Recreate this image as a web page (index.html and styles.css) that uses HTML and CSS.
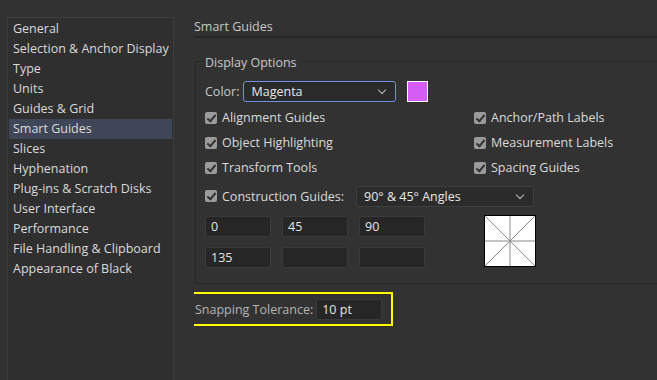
FILE: index.html
```html
<!DOCTYPE html>
<html lang="en">
<head>
    <meta charset="UTF-8">
    <title>Preferences - Smart Guides</title>
    <link rel="stylesheet" href="styles.css">
</head>
<body>
    <div class="window">
        <ul class="sidebar">
            <li>General</li>
            <li>Selection &amp; Anchor Display</li>
            <li>Type</li>
            <li>Units</li>
            <li>Guides &amp; Grid</li>
            <li class="selected">Smart Guides</li>
            <li>Slices</li>
            <li>Hyphenation</li>
            <li>Plug-ins &amp; Scratch Disks</li>
            <li>User Interface</li>
            <li>Performance</li>
            <li>File Handling &amp; Clipboard</li>
            <li>Appearance of Black</li>
        </ul>

        <div class="main">
            <div class="page-title">Smart Guides</div>

            <div class="group">
                <div class="legend">Display Options</div>

                <div class="color-row">
                    <span class="label">Color:</span>
                    <div class="select color-select">Magenta<span class="chev"></span></div>
                    <div class="swatch"></div>
                </div>

                <div class="checks">
                    <div class="check"><span class="box"></span>Alignment Guides</div>
                    <div class="check"><span class="box"></span>Anchor/Path Labels</div>
                    <div class="check"><span class="box"></span>Object Highlighting</div>
                    <div class="check"><span class="box"></span>Measurement Labels</div>
                    <div class="check"><span class="box"></span>Transform Tools</div>
                    <div class="check"><span class="box"></span>Spacing Guides</div>
                </div>

                <div class="construct-row">
                    <div class="check construct"><span class="box"></span>Construction Guides:</div>
                    <div class="select angle-select">90° &amp; 45° Angles<span class="chev"></span></div>
                </div>

                <div class="angles-row">
                    <div class="angles">
                        <div class="field">0</div>
                        <div class="field">45</div>
                        <div class="field">90</div>
                        <div class="field">135</div>
                        <div class="field"></div>
                        <div class="field"></div>
                    </div>
                    <svg class="preview" width="52" height="52" viewBox="0 0 52 52">
                        <rect x="0.5" y="0.5" width="51" height="51" fill="#fff" stroke="#000"/>
                        <line x1="26" y1="1" x2="26" y2="51" stroke="#c4c4c4" stroke-width="2"/>
                        <line x1="1" y1="26" x2="51" y2="26" stroke="#c4c4c4" stroke-width="2"/>
                        <line x1="1" y1="1" x2="51" y2="51" stroke="#8a8a8a" stroke-width="1"/>
                        <line x1="51" y1="1" x2="1" y2="51" stroke="#8a8a8a" stroke-width="1"/>
                    </svg>
                </div>
            </div>

            <div class="snap">
                <span class="snap-label">Snapping Tolerance:</span>
                <div class="field snap-field">10 pt</div>
            </div>
        </div>
    </div>
</body>
</html>
```

FILE: styles.css
```css
body {
    margin: 0;
    background-color: #323232;
    font-family: "Open Sans", "DejaVu Sans", sans-serif;
    font-size: 12.5px;
    color: #d8d8d8;
    overflow: hidden;
}
.window {
    display: flex;
    height: 380px;
    overflow: hidden;
}
.sidebar {
    list-style: none;
    margin: 17px 0 0 7px;
    padding: 1px 0 0 0;
    width: 165px;
    background: #2f2f2f;
    border: 1px solid #3d3d3d;
    border-bottom: none;
    flex-shrink: 0;
}
.sidebar li {
    height: 20px;
    line-height: 20px;
    margin: 0 1px;
    padding-left: 4px;
    white-space: nowrap;
    color: #dadada;
}
.sidebar li.selected {
    background: #3e4658;
}
.main {
    flex: 1;
    margin-left: 20px;
    overflow: hidden;
}
.page-title {
    margin-top: 17px;
    height: 19px;
    line-height: 20px;
    color: #c8c8c8;
    border-bottom: 2px solid #272727;
    width: 600px;
}
.group {
    margin-top: 23px;
    margin-left: 1px;
    width: 600px;
    height: 223px;
    border: 1px solid #282828;
    padding-left: 9px;
    box-sizing: border-box;
}
.legend {
    width: max-content;
    background: #323232;
    padding: 0 4px 0 0;
    margin-top: -8px;
    height: 18px;
    line-height: 18px;
    color: #c8c8c8;
}
.color-row {
    display: flex;
    align-items: center;
    margin-top: 8px;
    height: 22px;
}
.label {
    color: #c8c8c8;
    margin-right: 4px;
}
.select {
    box-sizing: border-box;
    height: 21px;
    line-height: 19px;
    padding-left: 7px;
    border-radius: 3px;
    position: relative;
    color: #e8e8e8;
    white-space: nowrap;
}
.color-select {
    width: 153px;
    background: #2a2a2a;
    border: 1px solid #6f8fe0;
}
.angle-select {
    width: 178px;
    background: #2b2b2b;
    border: 1px solid #3e3e3e;
}
.chev {
    position: absolute;
    right: 10px;
    top: 5px;
    width: 5px;
    height: 5px;
    border-right: 1px solid #bcbcbc;
    border-bottom: 1px solid #bcbcbc;
    transform: rotate(45deg);
}
.swatch {
    width: 19px;
    height: 19px;
    margin-left: 11px;
    background: #d65cf6;
    border: 1px solid #ffffff;
}
.checks {
    display: grid;
    grid-template-columns: 269px auto;
    grid-auto-rows: 25px;
    margin-top: 3px;
}
.check {
    display: flex;
    align-items: center;
    white-space: nowrap;
    color: #dadada;
}
.construct {
    width: 151px;
}
.box {
    width: 12px;
    height: 12px;
    border-radius: 2px;
    background: #9b9b9b;
    margin-right: 5px;
    position: relative;
    flex-shrink: 0;
}
.box::after {
    content: "";
    position: absolute;
    left: 4px;
    top: 1px;
    width: 3px;
    height: 7px;
    border-right: 2px solid #333;
    border-bottom: 2px solid #333;
    transform: rotate(40deg);
}
.construct-row {
    display: flex;
    align-items: center;
    margin-top: 4px;
    height: 24px;
}
.angles-row {
    display: flex;
    margin-top: 8px;
}
.angles {
    display: grid;
    grid-template-columns: repeat(3, 66px);
    grid-auto-rows: 21px;
    column-gap: 11px;
    row-gap: 10px;
}
.field {
    box-sizing: border-box;
    height: 21px;
    line-height: 19px;
    padding-left: 5px;
    background: #262626;
    border: 1px solid #3a3a3a;
    border-radius: 2px;
    color: #e4e4e4;
}
.preview {
    margin-left: 59px;
    margin-top: -1px;
}
.snap {
    display: flex;
    align-items: center;
    margin: 8px 0 0 -9px;
    padding: 4px 9px 4px 8px;
    border: 2px solid #ffff00;
    width: 208px;
    height: 34px;
    box-sizing: border-box;
}
.snap-label {
    color: #b4b4b4;
    margin-right: 3px;
    white-space: nowrap;
}
.snap-field {
    width: 67px;
    height: 21px;
    padding-left: 5px;
}
```
